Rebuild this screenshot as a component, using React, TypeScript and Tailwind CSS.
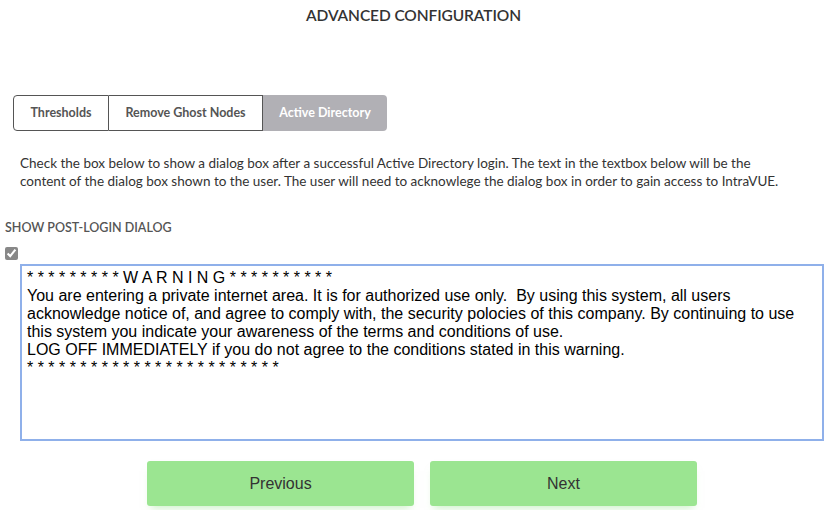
import React from "react";

export default function App() {
  const text = `* * * * * * * * * W A R N I N G * * * * * * * * * *
You are entering a private internet area. It is for authorized use only.  By using this system, all users acknowledge notice of, and agree to comply with, the security polocies of this company. By continuing to use this system you indicate your awareness of the terms and conditions of use.
LOG OFF IMMEDIATELY if you do not agree to the conditions stated in this warning.
* * * * * * * * * * * * * * * * * * * * * * * *`;
  return (
    <div className="w-[827px] h-[510px] bg-white overflow-hidden text-[#333]" style={{ fontFamily: "Lato, 'Open Sans', sans-serif" }}>
      <div className="pt-[4px] text-center text-[15.5px] font-semibold tracking-[-0.1px] text-[#333]">ADVANCED CONFIGURATION</div>
      <div className="mt-[68px] ml-[13px] flex h-[36px] w-[374px] text-[12.5px] font-bold">
        <div className="flex w-[96px] items-center justify-center rounded-l-[4px] border border-[#555] text-[#555]">Thresholds</div>
        <div className="flex w-[154px] items-center justify-center border-y border-r border-[#555] text-[#555]">Remove Ghost Nodes</div>
        <div className="flex flex-1 items-center justify-center rounded-r-[4px] bg-[#b1b0b5] text-white">Active Directory</div>
      </div>
      <p className="mt-[23px] ml-[20px] w-[772px] text-[13.5px] leading-[18px] text-[#333]">
        Check the box below to show a dialog box after a successful Active Directory login. The text in the textbox below will be the content of the dialog box shown to the user. The user will need to acknowlege the dialog box in order to gain access to IntraVUE.
      </p>
      <div className="mt-[29px] ml-[5px] text-[12.5px] font-semibold text-[#555]">SHOW POST-LOGIN DIALOG</div>
      <div className="mt-[4px] ml-[5px] h-[13px] w-[13px]">
        <input type="checkbox" defaultChecked className="m-0 h-[13px] w-[13px] accent-[#888]" />
      </div>
      <textarea
        defaultValue={text}
        className="mt-[9px] ml-[20px] block h-[177px] w-[804px] resize-none border-2 border-[#8fb0ea] px-[5px] pt-[3px] pb-[1px] text-[16px] leading-[18px] text-black outline-none"
        style={{ fontFamily: "'Liberation Sans', Arial, sans-serif" }}
      />
      <div className="mt-[20px] flex justify-center gap-[16px] pl-[17px]">
        <button className="h-[45px] w-[267px] rounded-[3px] bg-[#9be591] text-[16px] text-[#333] shadow-[0_6px_8px_-4px_rgba(155,229,145,0.5)]" style={{ fontFamily: "'Liberation Sans', Arial, sans-serif" }}>Previous</button>
        <button className="h-[45px] w-[267px] rounded-[3px] bg-[#9be591] text-[16px] text-[#333] shadow-[0_6px_8px_-4px_rgba(155,229,145,0.5)]" style={{ fontFamily: "'Liberation Sans', Arial, sans-serif" }}>Next</button>
      </div>
    </div>
  );
}
